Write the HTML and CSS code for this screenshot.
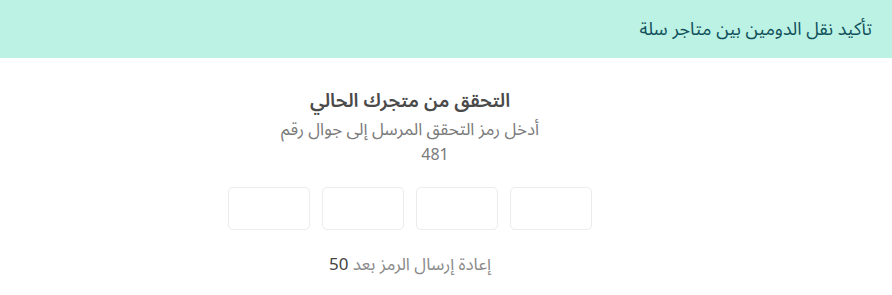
FILE: index.html
```html
<!DOCTYPE html>
<html lang="ar" dir="rtl">
<head>
    <meta charset="UTF-8">
    <meta name="viewport" content="width=device-width, initial-scale=1.0">
    <title>تأكيد نقل الدومين</title>
    <link rel="stylesheet" href="styles.css">
</head>
<body>
    <div class="header">تأكيد نقل الدومين بين متاجر سلة</div>

    <div class="content">
        <h2 class="title">التحقق من متجرك الحالي</h2>
        <p class="subtitle">أدخل رمز التحقق المرسل إلى جوال رقم</p>
        <p class="phone">481</p>

        <div class="code-inputs" dir="ltr">
            <input type="text" maxlength="1" class="code-box">
            <input type="text" maxlength="1" class="code-box">
            <input type="text" maxlength="1" class="code-box">
            <input type="text" maxlength="1" class="code-box">
        </div>

        <p class="resend">إعادة إرسال الرمز بعد <span class="timer">50</span></p>
    </div>
</body>
</html>
```

FILE: styles.css
```css
body {
    margin: 0;
    font-family: "Noto Sans Arabic", "DejaVu Sans", sans-serif;
    background-color: #fff;
}
.header {
    height: 58px;
    display: flex;
    align-items: center;
    padding: 0 20px;
    background-color: #bbf2e4;
    color: #11505a;
    font-size: 18px;
}
.content {
    width: 820px;
    margin-left: 0;
    margin-right: auto;
    text-align: center;
    padding-top: 30px;
}
.title {
    margin: 0;
    font-size: 19px;
    font-weight: 600;
    color: #4a4a4a;
    line-height: 26px;
}
.subtitle {
    margin: 4px 0 0;
    font-size: 17px;
    color: #7a7a7a;
    line-height: 25px;
}
.phone {
    margin: 0;
    padding-left: 50px;
    font-size: 16px;
    color: #7a7a7a;
    line-height: 25px;
}
.code-inputs {
    display: flex;
    justify-content: center;
    gap: 12px;
    margin-top: 19px;
}
.code-box {
    width: 82px;
    height: 43px;
    box-sizing: border-box;
    border: 1px solid #ececec;
    border-radius: 5px;
    background: #fff;
    outline: none;
    text-align: center;
    padding: 0;
}
.resend {
    margin: 24px 0 0;
    font-size: 17px;
    color: #8a8a8a;
    line-height: 22px;
}
.timer {
    color: #444;
}
```
